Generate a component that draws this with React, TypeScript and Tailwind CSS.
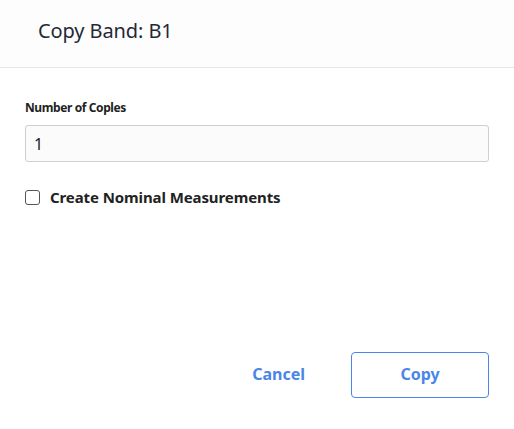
import React from 'react';

const font = { fontFamily: '"Source Sans Pro", "Noto Sans", "Open Sans", sans-serif' };

export default function App() {
  return (
    <div className="w-[514px] h-[429px] bg-white flex flex-col text-[#1c1c1c]" style={font}>
      {/* header */}
      <div className="h-[68px] bg-[#fdfdfd] border-b border-[#e6e6e6] flex items-center pl-[38px] shrink-0">
        <h2 className="text-[20px] font-normal text-[#1f2a36] -mt-[5px] tracking-[-0.1px]">Copy Band: B1</h2>
      </div>

      {/* body */}
      <div className="flex-1 px-[25px] pt-[34px]">
        <label className="block text-[12px] font-bold tracking-[-0.4px] text-[#222] leading-none">
          Number of Coples
        </label>
        <input
          defaultValue="1"
          className="mt-[11px] w-[464px] h-[37px] border border-[#cfcfcf] rounded-[3px] bg-[#fbfbfb] px-[8px] text-[16px] text-[#222] outline-none"
          style={font}
        />
        <label className="mt-[24px] flex items-center gap-[10px]">
          <span className="w-[15px] h-[15px] rounded-[3px] border border-[#555] bg-white shrink-0" />
          <span className="text-[15px] font-bold text-[#222] tracking-[-0.1px]">Create Nominal Measurements</span>
        </label>
      </div>

      {/* footer */}
      <div className="flex items-center justify-end gap-[46px] pr-[25px] pb-[31px]">
        <button className="text-[16px] font-bold text-[#4a86e8] -mt-[2px]" style={font}>Cancel</button>
        <button
          className="w-[138px] h-[46px] border border-[#4a86e8] rounded-[4px] text-[16px] font-bold text-[#4a86e8] bg-white pb-[3px]"
          style={font}
        >
          Copy
        </button>
      </div>
    </div>
  );
}
